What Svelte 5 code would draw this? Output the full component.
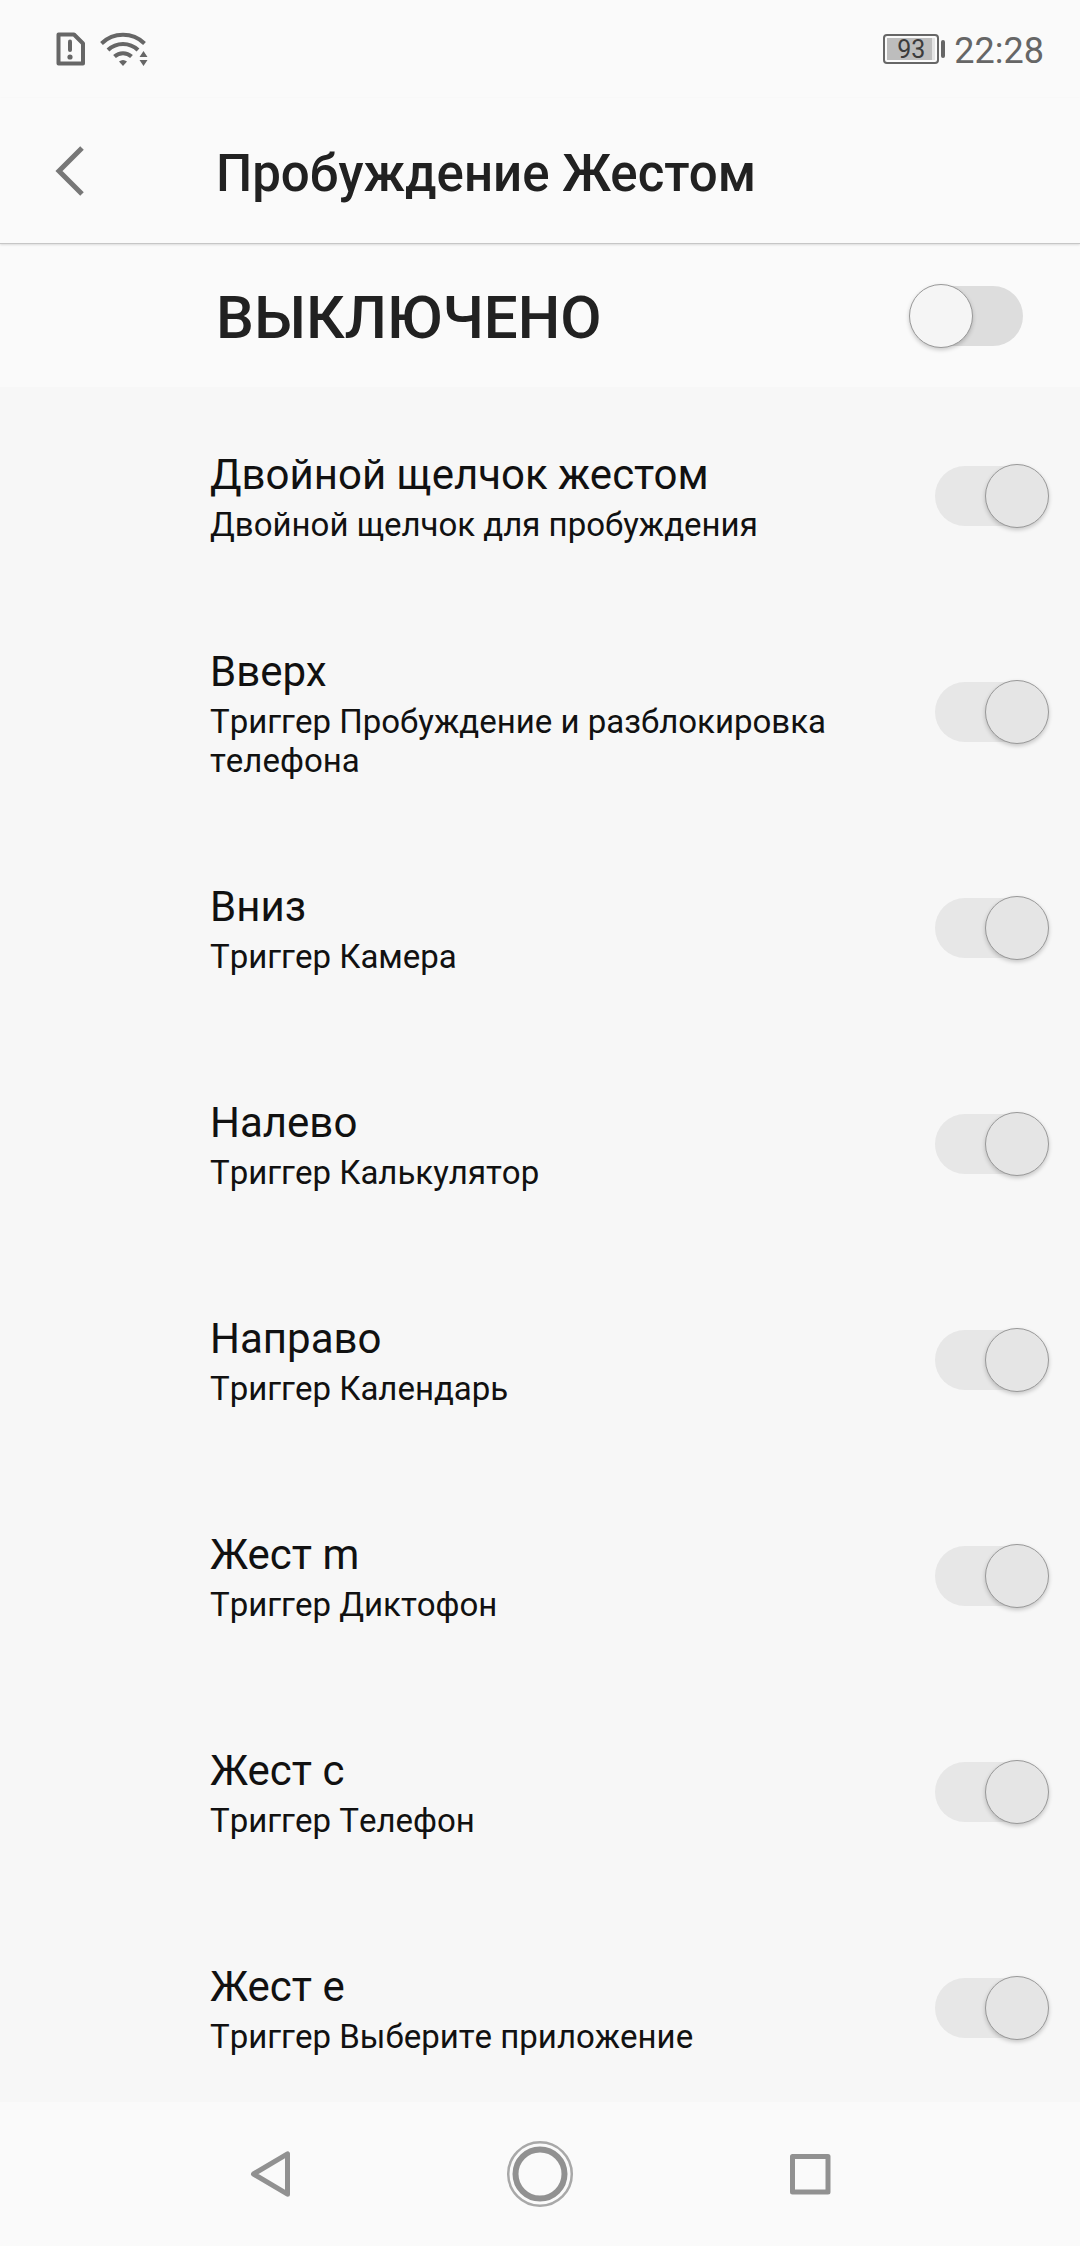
<script lang="ts">
  type Gesture = { id: string; title: string; action: string; on: boolean };

  let enabled = $state(false);

  let gestures: Gesture[] = $state([
    { id: "double-tap", title: "Двойной щелчок жестом", action: "Двойной щелчок для пробуждения", on: true },
    { id: "up", title: "Вверх", action: "Триггер Пробуждение и разблокировка телефона", on: true },
    { id: "down", title: "Вниз", action: "Триггер Камера", on: true },
    { id: "left", title: "Налево", action: "Триггер Калькулятор", on: true },
    { id: "right", title: "Направо", action: "Триггер Календарь", on: true },
    { id: "m", title: "Жест m", action: "Триггер Диктофон", on: true },
    { id: "c", title: "Жест c", action: "Триггер Телефон", on: true },
    { id: "e", title: "Жест e", action: "Триггер Выберите приложение", on: true },
  ]);
</script>

<div class="screen">
  <div class="status">
    <svg class="sim" width="30" height="36" viewBox="0 0 30 36">
      <path d="M2.5 3.5H18L27 12.5V32.500H2.500Z" fill="none" stroke="#666" stroke-width="4" stroke-linejoin="round" />
      <path d="M14 10.500V19" stroke="#666" stroke-width="4" stroke-linecap="round" />
      <circle cx="14" cy="26" r="2.600" fill="#666" />
    </svg>
    <svg width="48" height="36" viewBox="0 0 48 36">
      <g fill="none" stroke="#666" stroke-width="4">
        <path d="M1.500 12.500A31 31 0 0 1 44.500 12.500" />
        <path d="M8 19A21.500 21.500 0 0 1 38 19" />
        <path d="M14.500 25.500A12.500 12.500 0 0 1 31.500 25.500" />
      </g>
      <path d="M19 30.500Q23 27.500 27 30.500L23 35Z" fill="#666" />
      <path d="M43.500 20L47.500 26H39.500Z M39.500 29H47.500L43.500 35Z" fill="#666" />
    </svg>
    <div class="battery"><span class="charge">93</span></div>
    <time class="clock">22:28</time>
  </div>

  <header>
    <button class="back" aria-label="Назад">
      <svg width="32" height="52" viewBox="0 0 32 52">
        <path d="M28 3L5 26L28 49" fill="none" stroke="#777" stroke-width="5" />
      </svg>
    </button>
    <h1>Пробуждение Жестом</h1>
  </header>

  <div class="master">
    <label for="master">{enabled ? "ВКЛЮЧЕНО" : "ВЫКЛЮЧЕНО"}</label>
    <input id="master" class="switch" type="checkbox" role="switch" bind:checked={enabled} />
  </div>

  <main>
    {#each gestures as g (g.id)}
      <div class="row">
        <label for={g.id}>
          <span class="title">{g.title}</span>
          <span class="action">{g.action}</span>
        </label>
        <!-- gestures keep their own state but can't be changed while the master switch is off -->
        <input id={g.id} class="switch" type="checkbox" role="switch" disabled={!enabled} bind:checked={g.on} />
      </div>
    {/each}
  </main>

  <nav>
    <button aria-label="Назад">
      <svg width="68" height="68" viewBox="0 0 68 68">
        <path d="M17.500 34L51.500 13.800V54.200Z" fill="none" stroke="#919191" stroke-width="5" stroke-linejoin="round" />
      </svg>
    </button>
    <button aria-label="Домой">
      <svg width="68" height="68" viewBox="0 0 68 68" fill="none">
        <circle cx="34" cy="34" r="31.800" stroke="#a8a8a8" stroke-width="2.500" />
        <circle cx="34" cy="34" r="24.500" stroke="#919191" stroke-width="6" />
      </svg>
    </button>
    <button aria-label="Недавние">
      <svg width="68" height="68" viewBox="0 0 68 68">
        <rect x="16.500" y="16.500" width="35.500" height="35.500" fill="none" stroke="#919191" stroke-width="5" stroke-linejoin="round" />
      </svg>
    </button>
  </nav>
</div>

<style>
  :global(body) {
    background: #fafafa;
  }
  .screen {
    display: flex;
    flex-direction: column;
    height: 100vh;
    font-family: Roboto, sans-serif;
    background: #fafafa;
  }
  svg {
    display: block;
    flex: none;
  }
  button {
    padding: 0;
    border: 0;
    background: none;
    cursor: pointer;
  }

  .status {
    display: flex;
    align-items: center;
    flex: none;
    height: 98px;
    padding: 0 36px 0 56px;
    color: #666;
  }
  .sim {
    margin-right: 14px;
  }
  .battery {
    display: flex;
    align-items: center;
    margin-left: auto;
  }
  .battery::after {
    content: "";
    width: 4px;
    height: 18px;
    margin-left: 2px;
    border-radius: 2px;
    background: #666;
  }
  .charge {
    box-sizing: border-box;
    width: 56px;
    height: 30px;
    border: 2px solid #666;
    border-radius: 4px;
    padding: 2px;
    font-size: 25px;
    line-height: 24px;
    text-align: center;
    color: #3c3c3c;
    background: linear-gradient(to right, #bdbdbd 93%, #e4e4e4 93%) content-box;
  }
  .clock {
    margin-left: 9px;
    padding-top: 4px;
    font-size: 36px;
    line-height: 42px;
  }

  header {
    display: flex;
    align-items: center;
    flex: none;
    height: 145px;
    border-bottom: 1px solid #c6c6c6;
    box-shadow: 0 1px 2px rgba(0, 0, 0, 0.12);
    z-index: 1;
  }
  .back {
    width: 216px;
    padding-left: 54px;
  }
  h1 {
    margin: 0;
    padding-top: 6px;
    font-size: 51px;
    font-weight: 500;
    line-height: 60px;
    color: #212121;
  }

  .master {
    display: flex;
    align-items: center;
    justify-content: space-between;
    flex: none;
    height: 143px;
    padding: 0 57px 0 216px;
  }
  .master label {
    padding-top: 4px;
    font-size: 60px;
    font-weight: 500;
    line-height: 70px;
    color: #212121;
  }

  main {
    flex: 1;
    min-height: 0;
    overflow-y: auto;
    scrollbar-width: none;
    padding-top: 1px;
    background: #f7f7f7;
  }
  .row {
    display: flex;
    align-items: center;
    justify-content: space-between;
    gap: 48px;
    min-height: 216px;
    padding: 0 35px 0 210px;
    color: #111;
  }
  .row label {
    display: flex;
    flex-direction: column;
    gap: 5px;
    padding-top: 2px;
  }
  .title {
    font-size: 42px;
    line-height: 50px;
  }
  .action {
    font-size: 33px;
    line-height: 39px;
    font-kerning: none;
  }

  .switch {
    appearance: none;
    display: flex;
    align-items: center;
    flex: none;
    width: 110px;
    height: 60px;
    margin: 0;
    border-radius: 30px;
    background: #ddd;
  }
  /* the knob is taller than the track and hangs over its end */
  .switch::before {
    content: "";
    box-sizing: border-box;
    flex: none;
    width: 64px;
    height: 64px;
    margin: 0 -4px;
    border: 1px solid #999;
    border-radius: 50%;
    background: #f5f5f5;
    box-shadow: 0 2px 4px rgba(0, 0, 0, 0.2);
  }
  .switch:checked {
    justify-content: flex-end;
    background: #bfe3ff;
  }
  .switch:disabled {
    background: #e7e7e7;
  }
  .switch:disabled::before {
    background: #e5e5e5;
  }

  nav {
    display: flex;
    justify-content: center;
    flex: none;
    height: 144px;
  }
  nav button {
    display: flex;
    align-items: center;
    justify-content: center;
    width: 25%;
  }
</style>
